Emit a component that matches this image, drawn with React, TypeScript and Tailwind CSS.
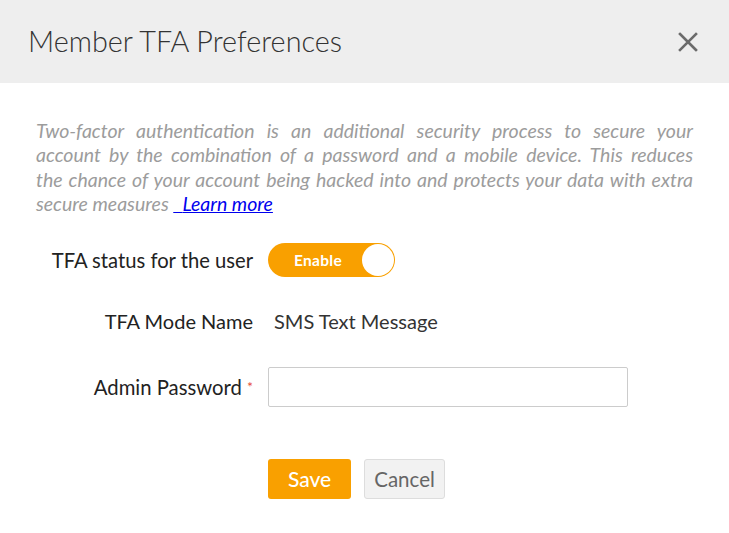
import React from 'react';

const descLines = [
  'Two-factor authentication is an additional security process to secure your',
  'account by the combination of a password and a mobile device. This reduces',
  'the chance of your account being hacked into and protects your data with extra',
];

const App = () => {
  return (
    <div className="w-[729px] h-[533px] bg-white font-['Lato','Liberation_Sans',sans-serif]">
      {/* Header */}
      <div className="h-[83px] bg-[#eeeeee] flex items-center justify-between pl-[28px] pr-[30px]">
        <h1 className="text-[28.8px] font-light text-[#333333]">Member TFA Preferences</h1>
        <button className="w-[22px] h-[22px] flex items-center justify-center">
          <svg width="20" height="20" viewBox="0 0 20 20" fill="none" stroke="#6b6b6b" strokeWidth="2.6" strokeLinecap="square">
            <path d="M2 2 L18 18 M18 2 L2 18" />
          </svg>
        </button>
      </div>

      {/* Body */}
      <div className="px-[36px] pt-[36px]">
        <div className="text-[19.5px] leading-[24.3px] italic text-[#9c9c9c]">
          {descLines.map((l) => (
            <p key={l} className="whitespace-nowrap text-justify [text-align-last:justify]">{l}</p>
          ))}
          <p>
            secure measures{' '}
            <a href="#" className="text-[#0000ee] underline">{'\u00a0\u00a0'}Learn more</a>
          </p>
        </div>

        <div className="mt-[27px] flex items-center h-[34px]">
          <label className="w-[217px] text-right text-[20.2px] text-[#222222]">TFA status for the user</label>
          <div className="ml-[15px] w-[127px] h-[34px] rounded-full bg-[#f9a000] flex items-center justify-between pl-[26px] pr-[1px]">
            <span className="text-white text-[15.5px] font-bold tracking-[0.3px]">Enable</span>
            <span className="w-[32px] h-[32px] rounded-full bg-white" />
          </div>
        </div>

        <div className="mt-[27px] flex items-center h-[34px]">
          <label className="w-[217px] text-right text-[20px] text-[#222222]">TFA Mode Name</label>
          <span className="ml-[21px] text-[20px] text-[#333333]">SMS Text Message</span>
        </div>

        <div className="mt-[29px] flex items-center h-[40px]">
          <label className="w-[217px] text-right text-[20.3px] text-[#222222]">
            Admin Password <span className="text-[#e74c3c] text-[14px] relative top-[-3px]">*</span>
          </label>
          <input type="password" className="ml-[15px] w-[360px] h-[40px] border border-[#cccccc] rounded-[2px] outline-none px-2" />
        </div>

        <div className="mt-[52px] flex gap-[13px] pl-[232px]">
          <button className="w-[83px] h-[40px] rounded-[3px] bg-[#f9a000] text-white text-[21px] font-medium">Save</button>
          <button className="w-[81px] h-[40px] rounded-[3px] bg-[#f2f2f2] border border-[#dddddd] text-[#666666] text-[20.5px]">Cancel</button>
        </div>
      </div>
    </div>
  );
};

export default App;
